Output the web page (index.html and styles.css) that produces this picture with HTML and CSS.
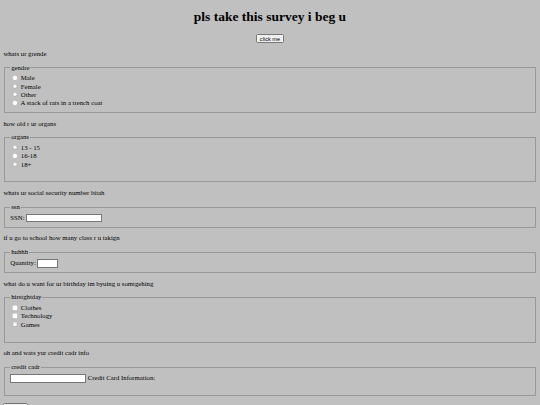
FILE: index.html
```html
<!DOCTYPE html>
<html lang="en">
<head>
  <meta charset="UTF-8" />
  <title>survey</title>
  <link rel="stylesheet" href="styles.css">
</head>
<body>

<h1 class="title">pls take this survey i beg u</h1>
<div class="top-btn">
  <button>click me</button>
</div>

<form>
  <p>whats ur grende</p>
  <fieldset>
    <legend>gendre</legend>
    <input type="radio" name="gender" id="male"> <label for="male">Male</label><br>
    <input type="radio" name="gender" id="female"> <label for="female">Female</label><br>
    <input type="radio" name="gender" id="other"> <label for="other">Other</label><br>
    <input type="radio" name="gender" id="rats"> <label for="rats">A stack of rats in a trench coat</label><br>
  </fieldset>

  <p>how old r ur organs</p>
  <fieldset>
    <legend>organs</legend>
    <input type="radio" name="age" id="a1"> <label for="a1">13 - 15</label><br>
    <input type="radio" name="age" id="a2"> <label for="a2">16-18</label><br>
    <input type="radio" name="age" id="a3"> <label for="a3">18+</label><br>
    <br>
  </fieldset>

  <p>whats ur social security number bitah</p>
  <fieldset>
    <legend>ssn</legend>
    <label for="ssn">SSN:</label> <input type="text" id="ssn">
  </fieldset>

  <p>if u go to school how many class r u takign</p>
  <fieldset>
    <legend>huhhh</legend>
    <label for="qty">Quantity:</label> <input type="number" id="qty" class="qty">
  </fieldset>

  <p>what do u want for ur birthday im byuing u somtgehing</p>
  <fieldset>
    <legend>hirstghtday</legend>
    <input type="checkbox" id="c1"> <label for="c1">Clothes</label><br>
    <input type="checkbox" id="c2"> <label for="c2">Technology</label><br>
    <input type="checkbox" id="c3"> <label for="c3">Games</label><br>
    <br>
  </fieldset>

  <p>oh and wats yur credit cadr info</p>
  <fieldset>
    <legend>credit cadr</legend>
    <input type="text" id="cc"> <label for="cc">Credit Card Information:</label><br>
    <br>
  </fieldset>
  <br>
  <input type="submit" value="Submit">
</form>

</body>
</html>
```
FILE: styles.css
```css
html {
  zoom: 0.421875;
}
body {
  background-color: silver;
  font-family: "Liberation Serif", "Times New Roman", serif;
}
.title {
  text-align: center;
  margin-top: 14px;
}
.top-btn {
  text-align: center;
}
fieldset {
  border: 2px solid #999;
  line-height: 19.7px;
}
input[type="radio"],
input[type="checkbox"] {
  margin: 0 3px 0 5px;
  vertical-align: -1px;
}
.qty {
  width: 40px;
}
```
